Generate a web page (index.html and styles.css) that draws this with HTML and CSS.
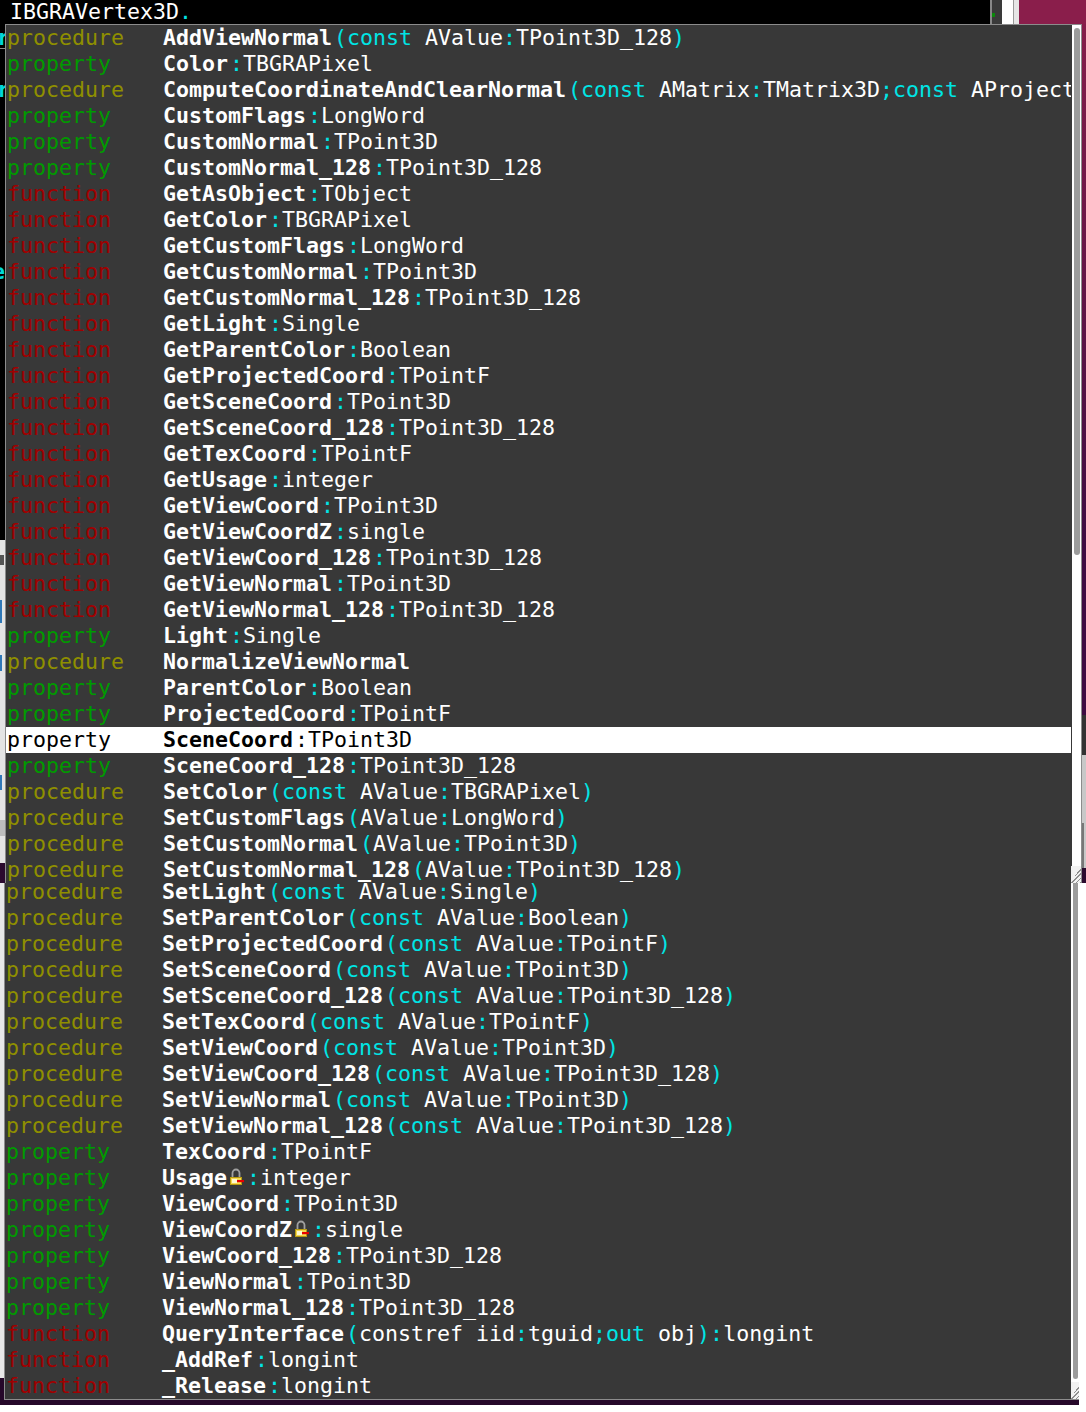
FILE: index.html
```html
<!DOCTYPE html>
<html lang="en">
<head>
<meta charset="utf-8">
<title>Code completion</title>
<link rel="stylesheet" href="styles.css">
</head>
<body>
<div class="shot shot-top">
  <div class="topbar">
    <div class="code-line">IBGRAVertex3D<i>.</i></div>
    <div class="chrome"><span class="chrome-dark"><span class="chrome-mark"></span></span><span class="chrome-light"></span></div>
    <div class="wall-top"></div>
  </div>
  <div class="under">
    <div class="strip-left">
      <div class="strip-black">
        <span class="peek peek-a">r</span>
        <span class="rule"></span>
        <span class="peek peek-b">r</span>
        <span class="peek peek-c">e</span>
      </div>
      <div class="strip-gray">
        <span class="mark mark-a"></span>
        <span class="mark mark-b"></span>
        <span class="mark mark-c"></span>
        <span class="mark mark-d"></span>
        <span class="mark mark-e"></span>
      </div>
      <div class="strip-purple"></div>
    </div>
    <div class="strip-right">
      <div class="wall"></div>
      <div class="win-dark"></div>
      <div class="win-light"><span class="win-line"></span></div>
      <div class="strip-purple"></div>
    </div>
  </div>
  <div class="popup popup-top">
    <div class="list">
      <div class="row"><span class="kind proc">procedure</span><span class="sig"><b>AddViewNormal</b><i>(const</i> AValue<i>:</i>TPoint3D_128<i>)</i></span></div>
      <div class="row"><span class="kind prop">property</span><span class="sig"><b>Color</b><i>:</i>TBGRAPixel</span></div>
      <div class="row"><span class="kind proc">procedure</span><span class="sig"><b>ComputeCoordinateAndClearNormal</b><i>(const</i> AMatrix<i>:</i>TMatrix3D<i>;const</i> AProjection</span></div>
      <div class="row"><span class="kind prop">property</span><span class="sig"><b>CustomFlags</b><i>:</i>LongWord</span></div>
      <div class="row"><span class="kind prop">property</span><span class="sig"><b>CustomNormal</b><i>:</i>TPoint3D</span></div>
      <div class="row"><span class="kind prop">property</span><span class="sig"><b>CustomNormal_128</b><i>:</i>TPoint3D_128</span></div>
      <div class="row"><span class="kind func">function</span><span class="sig"><b>GetAsObject</b><i>:</i>TObject</span></div>
      <div class="row"><span class="kind func">function</span><span class="sig"><b>GetColor</b><i>:</i>TBGRAPixel</span></div>
      <div class="row"><span class="kind func">function</span><span class="sig"><b>GetCustomFlags</b><i>:</i>LongWord</span></div>
      <div class="row"><span class="kind func">function</span><span class="sig"><b>GetCustomNormal</b><i>:</i>TPoint3D</span></div>
      <div class="row"><span class="kind func">function</span><span class="sig"><b>GetCustomNormal_128</b><i>:</i>TPoint3D_128</span></div>
      <div class="row"><span class="kind func">function</span><span class="sig"><b>GetLight</b><i>:</i>Single</span></div>
      <div class="row"><span class="kind func">function</span><span class="sig"><b>GetParentColor</b><i>:</i>Boolean</span></div>
      <div class="row"><span class="kind func">function</span><span class="sig"><b>GetProjectedCoord</b><i>:</i>TPointF</span></div>
      <div class="row"><span class="kind func">function</span><span class="sig"><b>GetSceneCoord</b><i>:</i>TPoint3D</span></div>
      <div class="row"><span class="kind func">function</span><span class="sig"><b>GetSceneCoord_128</b><i>:</i>TPoint3D_128</span></div>
      <div class="row"><span class="kind func">function</span><span class="sig"><b>GetTexCoord</b><i>:</i>TPointF</span></div>
      <div class="row"><span class="kind func">function</span><span class="sig"><b>GetUsage</b><i>:</i>integer</span></div>
      <div class="row"><span class="kind func">function</span><span class="sig"><b>GetViewCoord</b><i>:</i>TPoint3D</span></div>
      <div class="row"><span class="kind func">function</span><span class="sig"><b>GetViewCoordZ</b><i>:</i>single</span></div>
      <div class="row"><span class="kind func">function</span><span class="sig"><b>GetViewCoord_128</b><i>:</i>TPoint3D_128</span></div>
      <div class="row"><span class="kind func">function</span><span class="sig"><b>GetViewNormal</b><i>:</i>TPoint3D</span></div>
      <div class="row"><span class="kind func">function</span><span class="sig"><b>GetViewNormal_128</b><i>:</i>TPoint3D_128</span></div>
      <div class="row"><span class="kind prop">property</span><span class="sig"><b>Light</b><i>:</i>Single</span></div>
      <div class="row"><span class="kind proc">procedure</span><span class="sig"><b>NormalizeViewNormal</b></span></div>
      <div class="row"><span class="kind prop">property</span><span class="sig"><b>ParentColor</b><i>:</i>Boolean</span></div>
      <div class="row"><span class="kind prop">property</span><span class="sig"><b>ProjectedCoord</b><i>:</i>TPointF</span></div>
      <div class="row selected"><span class="kind prop">property</span><span class="sig"><b>SceneCoord</b><i>:</i>TPoint3D</span></div>
      <div class="row"><span class="kind prop">property</span><span class="sig"><b>SceneCoord_128</b><i>:</i>TPoint3D_128</span></div>
      <div class="row"><span class="kind proc">procedure</span><span class="sig"><b>SetColor</b><i>(const</i> AValue<i>:</i>TBGRAPixel<i>)</i></span></div>
      <div class="row"><span class="kind proc">procedure</span><span class="sig"><b>SetCustomFlags</b><i>(</i>AValue<i>:</i>LongWord<i>)</i></span></div>
      <div class="row"><span class="kind proc">procedure</span><span class="sig"><b>SetCustomNormal</b><i>(</i>AValue<i>:</i>TPoint3D<i>)</i></span></div>
      <div class="row"><span class="kind proc">procedure</span><span class="sig"><b>SetCustomNormal_128</b><i>(</i>AValue<i>:</i>TPoint3D_128<i>)</i></span></div>
    </div>
    <div class="scroll scroll-top">
      <span class="thumb thumb-top"></span>
      <span class="grip grip-top"></span>
    </div>
  </div>
</div>

<div class="shot shot-bottom">
  <div class="strip-lower"></div>
  <div class="popup popup-bottom">
    <div class="list list-bottom">
      <div class="row"><span class="kind proc">procedure</span><span class="sig"><b>SetLight</b><i>(const</i> AValue<i>:</i>Single<i>)</i></span></div>
      <div class="row"><span class="kind proc">procedure</span><span class="sig"><b>SetParentColor</b><i>(const</i> AValue<i>:</i>Boolean<i>)</i></span></div>
      <div class="row"><span class="kind proc">procedure</span><span class="sig"><b>SetProjectedCoord</b><i>(const</i> AValue<i>:</i>TPointF<i>)</i></span></div>
      <div class="row"><span class="kind proc">procedure</span><span class="sig"><b>SetSceneCoord</b><i>(const</i> AValue<i>:</i>TPoint3D<i>)</i></span></div>
      <div class="row"><span class="kind proc">procedure</span><span class="sig"><b>SetSceneCoord_128</b><i>(const</i> AValue<i>:</i>TPoint3D_128<i>)</i></span></div>
      <div class="row"><span class="kind proc">procedure</span><span class="sig"><b>SetTexCoord</b><i>(const</i> AValue<i>:</i>TPointF<i>)</i></span></div>
      <div class="row"><span class="kind proc">procedure</span><span class="sig"><b>SetViewCoord</b><i>(const</i> AValue<i>:</i>TPoint3D<i>)</i></span></div>
      <div class="row"><span class="kind proc">procedure</span><span class="sig"><b>SetViewCoord_128</b><i>(const</i> AValue<i>:</i>TPoint3D_128<i>)</i></span></div>
      <div class="row"><span class="kind proc">procedure</span><span class="sig"><b>SetViewNormal</b><i>(const</i> AValue<i>:</i>TPoint3D<i>)</i></span></div>
      <div class="row"><span class="kind proc">procedure</span><span class="sig"><b>SetViewNormal_128</b><i>(const</i> AValue<i>:</i>TPoint3D_128<i>)</i></span></div>
      <div class="row"><span class="kind prop">property</span><span class="sig"><b>TexCoord</b><i>:</i>TPointF</span></div>
      <div class="row"><span class="kind prop">property</span><span class="sig"><b>Usage</b><svg class="lock" viewBox="0 0 18 18" aria-hidden="true"><path d="M5.5 9.5V5a3.5 3.5 0 0 1 7 0v4.5" fill="none" stroke="#a0a0a0" stroke-width="1.8"/><rect x="3.5" y="9.5" width="11" height="7" fill="#f6d84e" stroke="#b89a10"/><rect x="5" y="11" width="5" height="4" fill="#fff8d0"/><rect x="10" y="12" width="7" height="2.2" fill="#e60000"/></svg><i>:</i>integer</span></div>
      <div class="row"><span class="kind prop">property</span><span class="sig"><b>ViewCoord</b><i>:</i>TPoint3D</span></div>
      <div class="row"><span class="kind prop">property</span><span class="sig"><b>ViewCoordZ</b><svg class="lock" viewBox="0 0 18 18" aria-hidden="true"><path d="M5.5 9.5V5a3.5 3.5 0 0 1 7 0v4.5" fill="none" stroke="#a0a0a0" stroke-width="1.8"/><rect x="3.5" y="9.5" width="11" height="7" fill="#f6d84e" stroke="#b89a10"/><rect x="5" y="11" width="5" height="4" fill="#fff8d0"/><rect x="10" y="12" width="7" height="2.2" fill="#e60000"/></svg><i>:</i>single</span></div>
      <div class="row"><span class="kind prop">property</span><span class="sig"><b>ViewCoord_128</b><i>:</i>TPoint3D_128</span></div>
      <div class="row"><span class="kind prop">property</span><span class="sig"><b>ViewNormal</b><i>:</i>TPoint3D</span></div>
      <div class="row"><span class="kind prop">property</span><span class="sig"><b>ViewNormal_128</b><i>:</i>TPoint3D_128</span></div>
      <div class="row"><span class="kind func">function</span><span class="sig"><b>QueryInterface</b><i>(</i>constref iid<i>:</i>tguid<i>;out</i> obj<i>):</i>longint</span></div>
      <div class="row"><span class="kind func">function</span><span class="sig"><b>_AddRef</b><i>:</i>longint</span></div>
      <div class="row"><span class="kind func">function</span><span class="sig"><b>_Release</b><i>:</i>longint</span></div>
    </div>
    <div class="scroll scroll-bottom">
      <span class="thumb thumb-bottom"></span>
      <span class="grip grip-bottom"></span>
    </div>
  </div>
</div>
</body>
</html>
```

FILE: styles.css
```css
* { box-sizing: border-box; }

html, body {
  margin: 0;
  padding: 0;
  background: #fff;
}

body {
  width: 1086px;
  height: 1412px;
  overflow: hidden;
  font-family: "DejaVu Sans Mono", monospace;
  font-size: 21.6px;
  color: #fff;
}

i { font-style: normal; color: #00e4e4; }

.shot { position: relative; overflow: hidden; }
.shot-top { height: 883px; background: #000; }
.shot-bottom { width: 1079px; height: 522px; background: #26082a; }

/* editor and desktop behind the top popup */
.topbar { display: flex; height: 24px; background: #000; }
.code-line { flex: 1; padding-left: 10px; line-height: 23px; white-space: pre; }
.chrome { display: flex; width: 29px; border-left: 2px solid #888; }
.chrome-dark { width: 10px; background: #3a3a3a; padding-top: 13px; }
.chrome-mark { display: block; width: 3px; height: 4px; background: #0a8a0a; }
.chrome-light { flex: 1; background: linear-gradient(90deg, #fff 0 11px, #999 11px 12px, #e6e6e6 12px); }
.wall-top { width: 67px; background: #8a1e4b; }

.under { display: flex; justify-content: space-between; height: 859px; }
.strip-left { display: flex; flex-direction: column; width: 5px; }
.strip-black { position: relative; height: 516px; background: #000; }
.strip-gray { position: relative; height: 323px; background: #e4e4e4; }
.strip-purple { flex: 1; background: #2b0a2e; }

.peek {
  position: absolute;
  width: 13px;
  overflow: hidden;
  line-height: 26px;
  font-weight: 700;
  color: #00d8d8;
}
.peek-a { top: 1px; left: -3px; }
.peek-b { top: 53px; left: -3px; }
.peek-c { top: 235px; left: -8px; }
.rule { position: absolute; top: 24px; left: 0; right: 0; height: 1px; background: #8a8a8a; }

.mark { position: absolute; background: #2f78b8; }
.mark-a { top: 15px; left: 0; width: 4px; height: 10px; background: #555; }
.mark-b { top: 60px; left: 0; width: 2px; height: 23px; }
.mark-c { top: 115px; left: 0; width: 2px; height: 16px; }
.mark-d { top: 235px; left: 0; width: 2px; height: 15px; }
.mark-e { top: 280px; left: 0; width: 5px; height: 16px; background: #bdbdbd; }

.strip-right { display: flex; flex-direction: column; width: 4px; }
.wall { height: 691px; background: linear-gradient(180deg, #861d4a 0%, #3e0c42 75%, #3e0c42 100%); }
.win-dark { height: 40px; background: #333; }
.win-light { position: relative; height: 113px; background: #c8c8c8; }
.win-line { position: absolute; left: 0; top: 68px; width: 2px; height: 45px; background: #777; }

/* completion popups */
.popup { position: absolute; display: flex; background: #383838; }
.popup-top {
  left: 5px;
  top: 24px;
  width: 1077px;
  height: 860px;
  border: 1px solid #8c8c8c;
  border-bottom: 0;
}
.popup-bottom {
  left: 4px;
  top: 0;
  width: 1075px;
  height: 517px;
  border-left: 1px solid #8c8c8c;
  border-bottom: 1px solid #8c8c8c;
}
.strip-lower { position: absolute; left: 0; top: 0; width: 4px; height: 495px; background: #e8e8e8; }
.list { width: 1065px; flex: none; overflow: hidden; }
.list-bottom { width: 1066px; padding-top: 0; }
.list-bottom > .row:first-child { margin-top: -4px; }

.row {
  display: flex;
  height: 26px;
  line-height: 25px;
  padding-left: 1px;
  white-space: pre;
  overflow: hidden;
}
.kind { flex: none; width: 156px; }
.proc { color: #8f8f00; }
.prop { color: #009a00; }
.func { color: #a00000; }
.sig b { font-weight: 700; margin-right: 2px; }

.selected { background: #fff; color: #000; }
.selected .kind, .selected i { color: #000; }

.lock {
  display: inline-block;
  width: 18px;
  height: 18px;
  margin-left: -2px;
  margin-right: 2px;
  vertical-align: -1px;
}

.scroll { position: relative; flex: 1; background: #fff; margin-left: 1px; }
.thumb { position: absolute; display: block; width: 6px; background: #9c9c9c; border-radius: 3px; }
.thumb-top { left: 2px; top: 3px; height: 527px; }
.scroll-bottom { margin-left: 0; }
.thumb-bottom { left: 2px; top: -5px; height: 501px; width: 5px; }

.grip {
  position: absolute;
  display: block;
  background:
    linear-gradient(to bottom right, #f2f2f2 50%, transparent 50%),
    repeating-linear-gradient(135deg, #8f8f8f 0 1px, #f2f2f2 1px 3px);
}
.grip-top { left: -1px; top: 841px; width: 10px; height: 17px; }
.grip-bottom { left: 0; top: 499px; width: 9px; height: 17px; }
```
